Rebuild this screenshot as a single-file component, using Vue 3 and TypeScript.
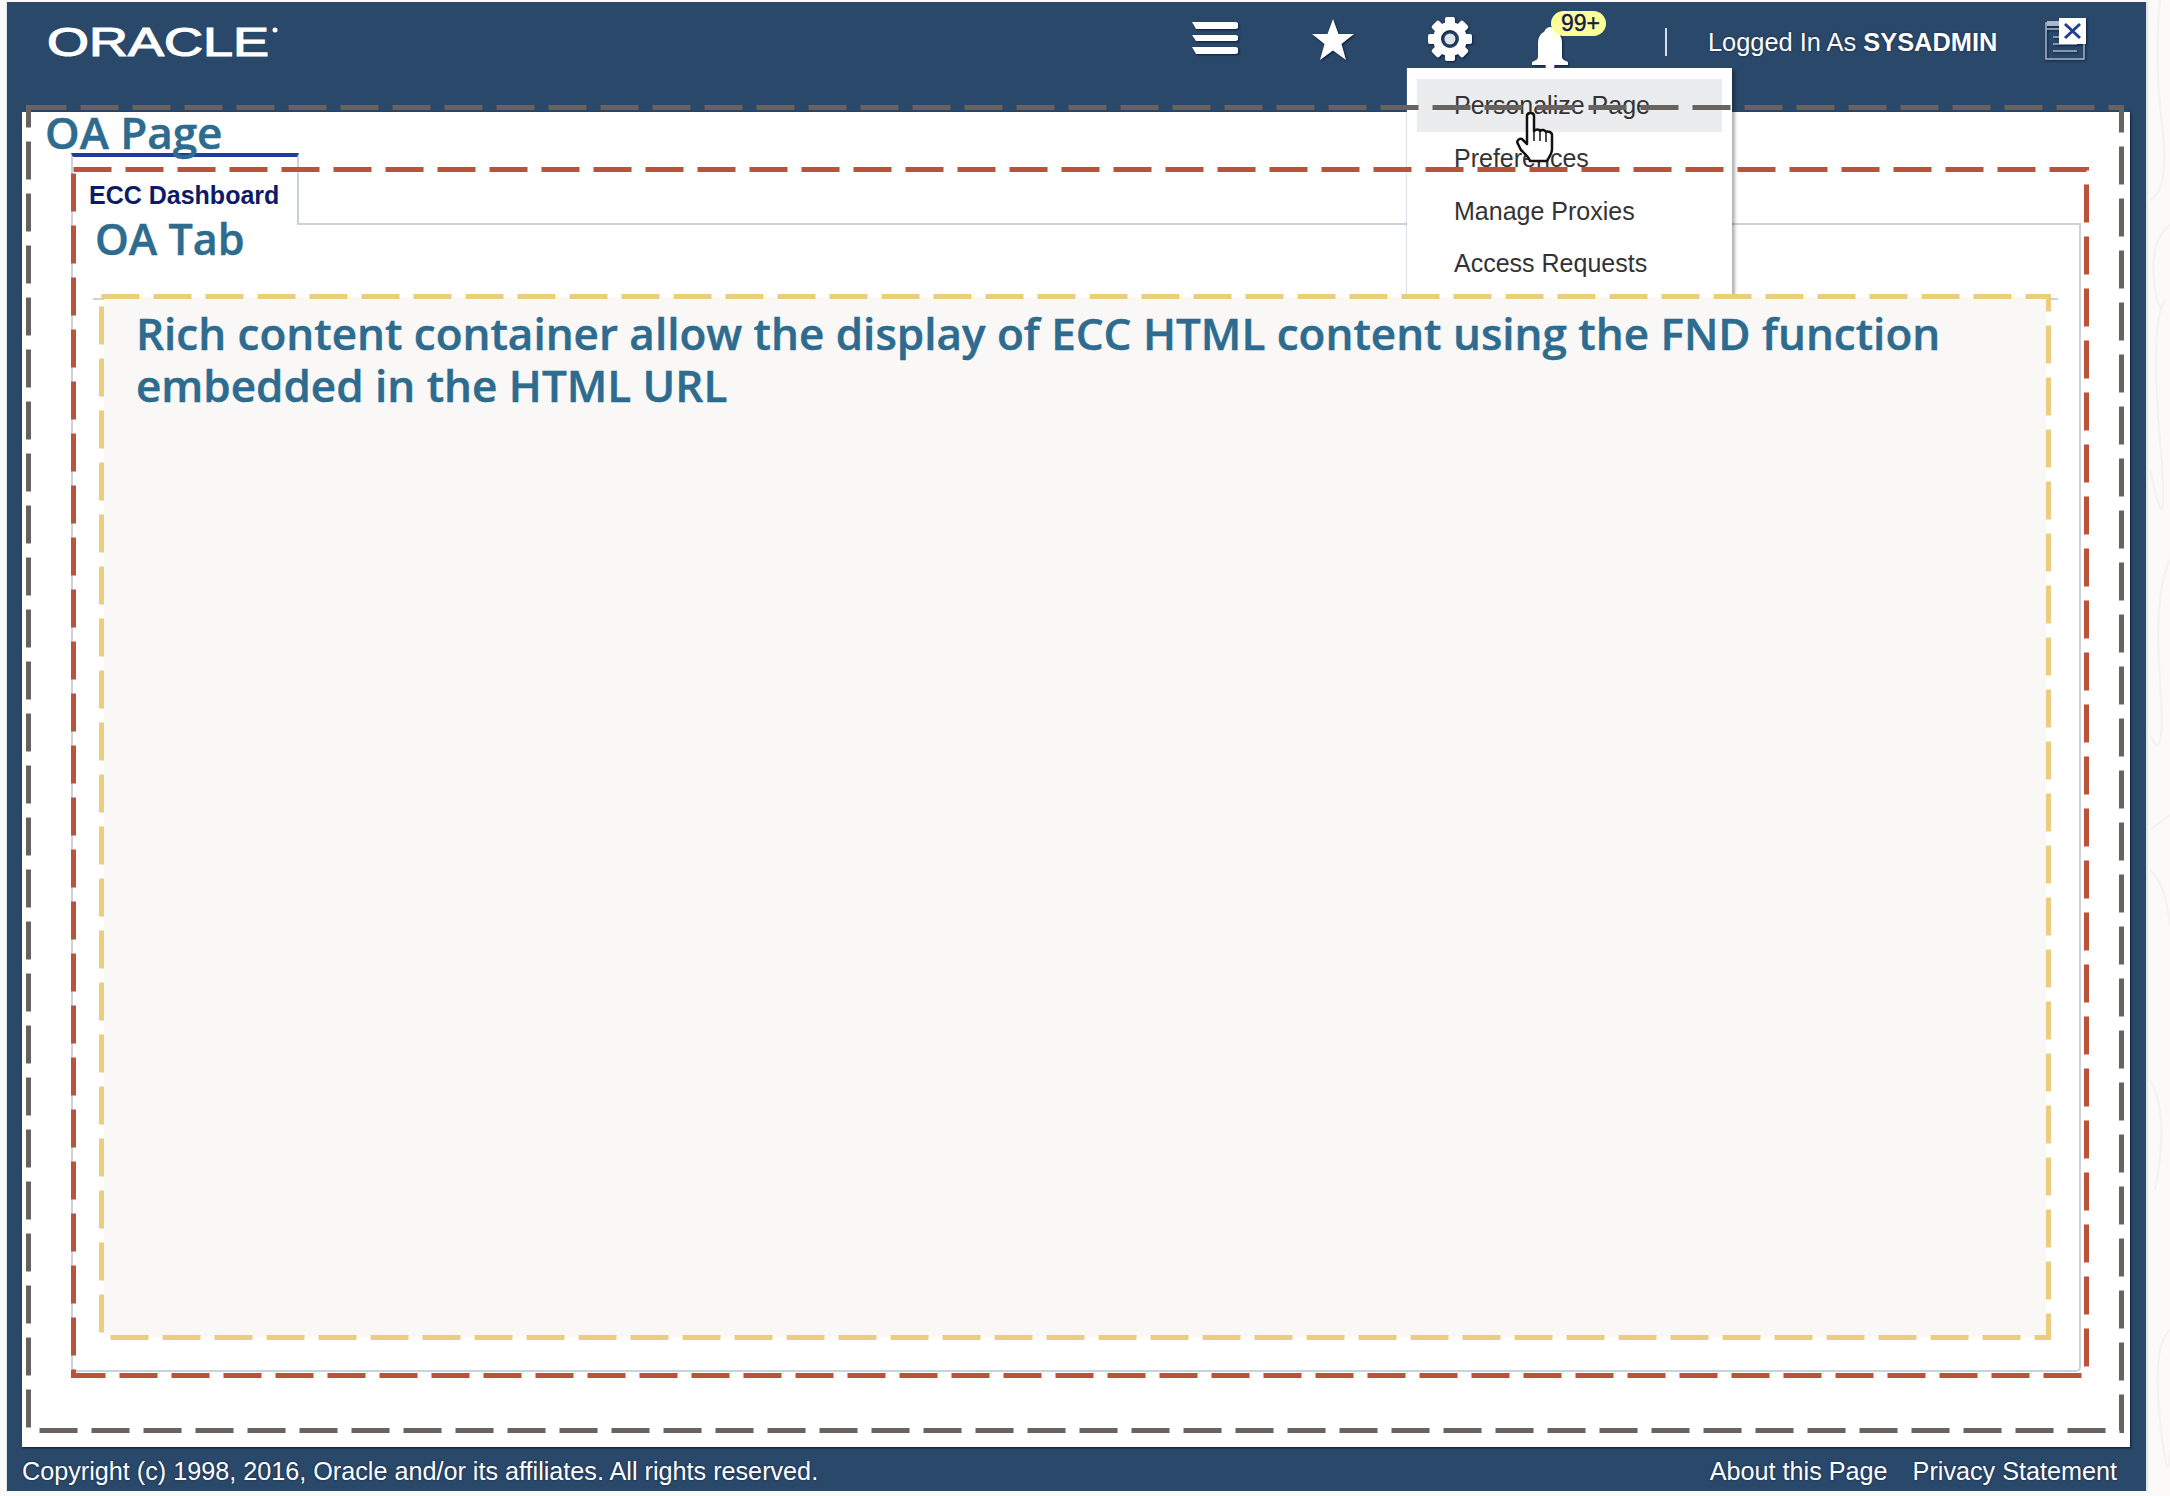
<script setup lang="ts">
const menuItems = ['Personalize Page', 'Preferences', 'Manage Proxies', 'Access Requests']
const gearTeeth = [0, 45, 90, 135, 180, 225, 270, 315]
const contours = [
  'M2160 0Q2154 57 2162 124T2150 200',
  'M2170 225Q2150 240 2154 280T2165 300Q2150 320 2160 440T2150 470',
  'M2170 560Q2154 590 2160 680T2150 735',
  'M2150 830L2170 815',
  'M2150 870Q2166 885 2170 925',
  'M2150 1080Q2170 1115 2155 1190',
  'M2170 1330Q2152 1345 2160 1420T2170 1450',
]
</script>

<template>
  <div class="page">
    <svg class="contours" width="2170" height="1496" viewBox="0 0 2170 1496">
      <path v-for="d in contours" :key="d" :d="d" />
    </svg>

    <div class="frame">
      <header class="topbar">
        <svg class="logo" width="232" height="46" viewBox="0 0 232 46">
          <text x="0" y="33" textLength="222" lengthAdjust="spacingAndGlyphs" class="logo-text">ORACLE</text>
          <circle cx="228" cy="7" r="2.500" fill="#fff" />
        </svg>
        <div class="icons">
          <svg class="ico" width="48" height="34" viewBox="0 0 48 34">
            <path d="M1 1h44l2 1v5l-2 1H5z" />
            <path d="M1 14h44l2 1v4l-2 1H5z" />
            <path d="M1 26h44l2 1v5l-2 1H5z" />
          </svg>
          <svg class="ico star" width="44" height="44" viewBox="0 0 44 44">
            <polygon points="22,1 27.500,16 43,16 30.500,26 35,42 22,32.500 9,42 13.500,26 1,16 16.500,16" />
          </svg>
          <svg class="ico gear" width="46" height="46" viewBox="0 0 46 46">
            <rect v-for="deg in gearTeeth" :key="deg" x="18" y="1" width="10" height="10" rx="2" :transform="`rotate(${deg} 23 23)`" />
            <circle cx="23" cy="23" r="13" fill="none" stroke="#fff" stroke-width="8" />
            <circle cx="23" cy="23" r="5.500" fill="#dfe4ea" />
          </svg>
          <div class="bell-wrap">
            <svg class="ico" width="38" height="44" viewBox="0 0 38 44">
              <path d="M19 0c3 0 5 2.500 6 5 4 2 6 6 6 11v14c0 2 2 3.500 6 5v3H1v-3c4-1.500 6-3 6-5V16c0-5 2-9 6-11 1-2.500 3-5 6-5z" />
              <circle cx="19" cy="39" r="4.500" />
            </svg>
            <span class="badge">99+</span>
          </div>
        </div>
        <div class="user">
          <span class="sep"></span>
          <span class="logged">Logged In As <b>SYSADMIN</b></span>
        </div>
        <svg class="logout" width="44" height="44" viewBox="0 0 44 44">
          <path d="M2 6h38v36H2z M2 12h14" fill="none" stroke="#a9b8c8" stroke-width="1.500" />
          <rect x="3" y="4" width="12" height="5" fill="#a9b8c8" />
          <path d="M9 20h12M9 27h24M9 34h24" stroke="#a9b8c8" stroke-width="1.500" />
          <rect x="15" y="1" width="27" height="26" fill="#fff" />
          <path d="M21 7l15 14M36 7L21 21" stroke="#1f3f96" stroke-width="3" />
        </svg>
      </header>

      <main class="content">
        <h1 class="page-title">OA Page</h1>
        <div class="tabs">
          <div class="tab">ECC Dashboard</div>
        </div>
        <section class="panel">
          <h2 class="tab-title">OA Tab</h2>
          <div class="divider">
            <div class="rich">
              <p>Rich content container allow the display of ECC HTML content using the FND function embedded in the HTML URL</p>
            </div>
          </div>
        </section>
      </main>

      <footer class="footer">
        <span>Copyright (c) 1998, 2016, Oracle and/or its affiliates. All rights reserved.</span>
        <span class="links"><span>About this Page</span><span>Privacy Statement</span></span>
      </footer>
    </div>

    <ul class="menu">
      <li v-for="(item, i) in menuItems" :key="item" :class="{ active: i === 0 }">{{ item }}</li>
    </ul>

    <svg class="hand" width="40" height="52" viewBox="0 0 40 52">
      <path d="M11 4c0-4 7-4 7 0v15c2-2 5-2 6 0 2-2 5-1 6 1 2-1 6 0 6 3v14c0 5-3 8-5 12H14c-1-4-6-8-9-11l-3-6c-2-3 1-6 4-5l5 5z" fill="#fff" stroke="#111" stroke-width="2.500" stroke-linejoin="round" />
      <path d="M18 19v10M24 19v10M30 21v9" stroke="#111" stroke-width="1.500" fill="none" />
    </svg>

    <svg class="marks" width="2170" height="1496" viewBox="0 0 2170 1496">
      <rect x="28.500" y="107.500" width="2093" height="1323" stroke="#68635e" />
      <rect x="73.500" y="169.500" width="2013" height="1206" stroke="#ba533c" />
      <rect x="101.500" y="296.500" width="1947" height="1041" stroke="#ebcd7b" />
    </svg>
  </div>
</template>

<style>
body {
  background: #fbfaf8;
}
</style>

<style scoped>
.page {
  position: relative;
  width: 2170px;
  height: 1496px;
  overflow: hidden;
  font-family: "Liberation Sans", Arial, sans-serif;
}

.contours {
  position: absolute;
  left: 0;
  top: 0;
  fill: none;
  stroke: #f3f2ef;
  stroke-width: 2;
}

.frame {
  margin-left: 7px;
  width: 2139px;
  height: 1489px;
  position: relative;
  top: 2px;
  display: flex;
  flex-direction: column;
  background: #2a4869;
  box-shadow: 2px 0 0 #dfe6ea, -1px 0 0 #dfe6ea;
}

.topbar {
  height: 110px;
  display: flex;
  align-items: flex-start;
  padding-left: 40px;
  color: #fff;
}
.logo {
  margin-top: 21px;
  overflow: visible;
}
.logo-text {
  font-family: "Liberation Sans", Arial, sans-serif;
  font-size: 41px;
  fill: #fff;
  stroke: #fff;
  stroke-width: 1.200;
}
.icons {
  display: flex;
  margin-left: 912px;
}
.ico {
  fill: #fff;
  filter: drop-shadow(1px 1px 1px #0c1c3c);
  flex: none;
}
.icons > .ico:first-child {
  margin-top: 19px;
}
.star {
  margin-top: 16px;
  margin-left: 72px;
}
.gear {
  margin-top: 14px;
  margin-left: 72px;
}
.bell-wrap {
  position: relative;
  margin: 25px 0 0 58px;
}
.badge {
  position: absolute;
  left: 20px;
  top: -16px;
  width: 55px;
  height: 25px;
  box-sizing: border-box;
  padding-left: 4px;
  border-radius: 13px;
  background: #ffff99;
  color: #141c4a;
  font-size: 23px;
  line-height: 25px;
  text-align: center;
  -webkit-text-stroke: 0.4px #141c4a;
}
.user {
  display: flex;
  align-items: center;
  margin-top: 25px;
  margin-left: 96px;
}
.sep {
  width: 2px;
  height: 28px;
  background: #d8dee6;
  margin-right: 41px;
}
.logged {
  font-size: 25.400px;
  line-height: 30px;
  text-shadow: 0 0 2px #0c1c3c;
}
.logout {
  margin-top: 15px;
  margin-left: 47px;
  flex: none;
  filter: drop-shadow(1px 1px 1px #0c1c3c);
}

.content {
  flex: 1;
  margin: 0 16px 0 15px;
  background: #fff;
  box-shadow: 1px 1px 2px #0c1c3c;
  display: flex;
  flex-direction: column;
  padding: 0 49px;
  min-height: 0;
}
.page-title {
  margin: 0 0 0 -26px;
  height: 41px;
  font-family: "Open Sans", sans-serif;
  font-size: 44px;
  font-weight: 600;
  line-height: 41px;
  color: #2d6b8f;
  -webkit-text-stroke: 0.5px #2d6b8f;
  position: relative;
  z-index: 1;
}
.tabs {
  height: 72px;
  border-bottom: 2px solid #ccd2da;
  box-sizing: border-box;
  flex: none;
}
.tab {
  width: 228px;
  height: 72px;
  box-sizing: border-box;
  border-top: 4px solid #1f3f96;
  border-left: 2px solid #ccd2da;
  border-right: 2px solid #ccd2da;
  background: #fff;
  padding: 24px 0 0 16px;
  font-size: 25px;
  font-weight: bold;
  color: #0d1a66;
}
.panel {
  height: 1145px;
  border: 2px solid #ccd2da;
  border-top: 0;
  border-radius: 0 0 5px 5px;
  padding: 0 21px 0 20px;
}
.tab-title {
  margin: -16px 0 0 2px;
  height: 60px;
  font-family: "Open Sans", sans-serif;
  font-size: 43px;
  font-weight: 600;
  line-height: 60px;
  color: #2d6b8f;
  -webkit-text-stroke: 0.5px #2d6b8f;
  position: relative;
}
.divider {
  border-top: 2px solid #ccd2da;
  padding: 0 12px 0 11px;
  margin-top: 29px;
}
.rich {
  height: 1040px;
  box-sizing: border-box;
  margin-top: -3px;
  background: #f9f8f6;
  padding: 10px 20px 0 32px;
  position: relative;
}
.rich p {
  margin: 0;
  font-family: "Open Sans", sans-serif;
  font-size: 44px;
  font-weight: 600;
  line-height: 52px;
  color: #2d6b8f;
  -webkit-text-stroke: 0.5px #2d6b8f;
}

.footer {
  height: 44px;
  display: flex;
  align-items: center;
  justify-content: space-between;
  padding: 5px 29px 0 15px;
  box-sizing: border-box;
  color: #fff;
  font-size: 25.200px;
  text-shadow: 0 0 2px #0c1c3c;
}
.links {
  display: flex;
  gap: 25px;
}

.menu {
  position: absolute;
  left: 1407px;
  top: 68px;
  width: 325px;
  height: 228px;
  margin: 0;
  padding: 11px 10px 0;
  box-sizing: border-box;
  list-style: none;
  background: #fff;
  box-shadow: 3px 2px 3px rgba(0, 0, 0, 0.3), -1px 0 1px rgba(120, 140, 170, 0.25);
  clip-path: inset(-6px -6px 0 -6px);
  font-size: 25px;
  color: #333;
}
.menu li {
  height: 52.800px;
  line-height: 53px;
  padding-left: 37px;
}
.menu li.active {
  background: #ebecee;
}

.hand {
  position: absolute;
  left: 1516px;
  top: 112px;
}

.marks {
  position: absolute;
  left: 0;
  top: 0;
  pointer-events: none;
  fill: none;
  stroke-width: 5;
  stroke-dasharray: 38 14;
}
</style>
